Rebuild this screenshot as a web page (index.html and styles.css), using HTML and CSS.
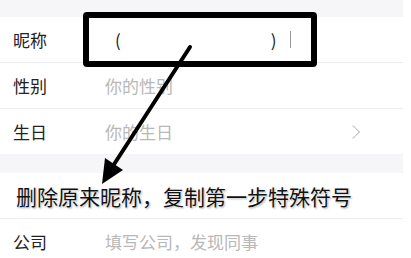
FILE: index.html
```html
<!DOCTYPE html>
<html lang="zh-CN">
<head>
    <meta charset="UTF-8">
    <meta name="viewport" content="width=device-width, initial-scale=1.0">
    <title>编辑资料</title>
    <link rel="stylesheet" href="styles.css">
</head>
<body>
    <div class="page">
        <div class="band top-band"></div>
        <div class="row">
            <span class="label">昵称</span>
            <span class="value nick">
                <span class="paren">(</span>
                <span class="paren close">)</span>
                <span class="cursor"></span>
            </span>
        </div>
        <div class="row">
            <span class="label">性别</span>
            <span class="placeholder">你的性别</span>
        </div>
        <div class="row no-line">
            <span class="label">生日</span>
            <span class="placeholder">你的生日</span>
            <span class="chevron"></span>
        </div>
        <div class="band gap-band"></div>
        <div class="row">
            <span class="note">删除原来昵称，复制第一步特殊符号</span>
        </div>
        <div class="row">
            <span class="label">公司</span>
            <span class="placeholder">填写公司，发现同事</span>
        </div>

        <!-- annotations drawn over the screenshot -->
        <div class="mark-box"></div>
        <svg class="arrow" width="411" height="258" viewBox="0 0 411 258">
            <line x1="190" y1="47" x2="111" y2="169" stroke="#000" stroke-width="4" stroke-linecap="round"/>
            <polygon points="102,184 105,158 123,170" fill="#000"/>
        </svg>
    </div>
</body>
</html>
```

FILE: styles.css
```css
body {
    margin: 0;
    background-color: #fff;
    font-family: "Noto Sans CJK SC", "Noto Sans", sans-serif;
}

.page {
    position: relative;
    width: 403px;
    height: 258px;
    overflow: hidden;
}

.band {
    background-color: #f6f6f8;
}

.top-band {
    height: 17px;
}

.gap-band {
    height: 19px;
}

.row {
    display: flex;
    align-items: center;
    height: 45px;
    padding-left: 13px;
    border-bottom: 1px solid #ececec;
    background-color: #fff;
}

.row.no-line {
    border-bottom: none;
}

.label {
    width: 92px;
    font-size: 17px;
    color: #222;
}

.placeholder {
    font-size: 17px;
    color: #b8b8b8;
}

.nick {
    display: flex;
    align-items: center;
    font-size: 17px;
    color: #222;
}

.paren {
    margin-left: 10px;
}

.paren.close {
    margin-left: 150px;
}

.cursor {
    width: 1px;
    height: 17px;
    margin-left: 13px;
    background-color: #9a9a9a;
}

.chevron {
    width: 9px;
    height: 9px;
    margin-left: auto;
    margin-right: 45px;
    border-top: 1px solid #c4c4c4;
    border-right: 1px solid #c4c4c4;
    transform: rotate(45deg);
}

.note {
    margin-left: 3px;
    font-size: 21px;
    line-height: 28px;
    color: #111;
    text-shadow: 0 0 2px #fff, 0 0 2px #fff, 1px 1px 2px #999;
}

.mark-box {
    position: absolute;
    left: 83px;
    top: 12px;
    width: 222px;
    height: 43px;
    border: 6px solid #000;
    border-radius: 4px;
}

.arrow {
    position: absolute;
    left: 0;
    top: 0;
}
```
